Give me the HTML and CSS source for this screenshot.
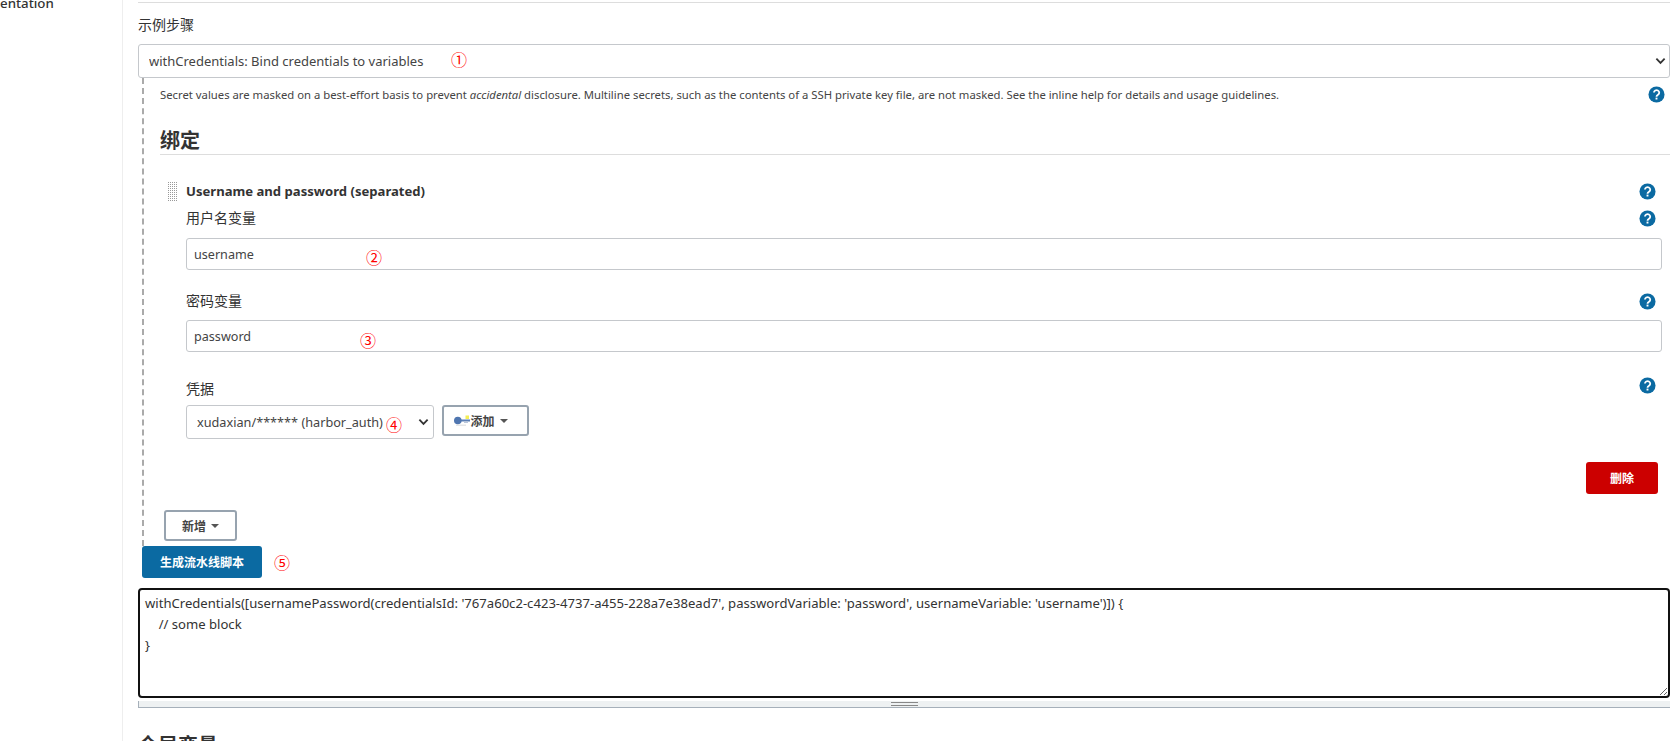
FILE: index.html
```html
<!DOCTYPE html>
<html lang="zh">
<head>
<meta charset="utf-8">
<title>Pipeline Syntax</title>
<link rel="stylesheet" href="styles.css">
</head>
<body>
<div class="page">
  <aside class="sidebar">entation</aside>
  <main class="main">
    <hr class="top-rule">
    <label class="label step-label">示例步骤</label>
    <div class="select-wrap full">
      <select class="select"><option>withCredentials: Bind credentials to variables</option></select>
      <svg class="chev" viewBox="0 0 12 8"><path d="M1.5 1.5 6 6l4.500-4.500" fill="none" stroke="#333" stroke-width="2"/></svg>
    </div>
    <div class="config">
      <div class="intro">
        <p>Secret values are masked on a best-effort basis to prevent <em>accidental</em> disclosure. Multiline secrets, such as the contents of a SSH private key file, are not masked. See the inline help for details and usage guidelines.</p>
        <span class="help"><svg viewBox="0 0 18 18"><use href="#q"/></svg></span>
      </div>
      <h2 class="section-title">绑定</h2>
      <div class="binding">
        <div class="handle"></div>
        <div class="binding-body">
          <div class="row title-row"><strong>Username and password (separated)</strong><span class="help"><svg viewBox="0 0 18 18"><use href="#q"/></svg></span></div>
          <div class="row label-row"><span class="label">用户名变量</span><span class="help"><svg viewBox="0 0 18 18"><use href="#q"/></svg></span></div>
          <input class="input" value="username">
          <div class="row label-row second"><span class="label">密码变量</span><span class="help"><svg viewBox="0 0 18 18"><use href="#q"/></svg></span></div>
          <input class="input" value="password">
          <div class="row label-row third"><span class="label">凭据</span><span class="help"><svg viewBox="0 0 18 18"><use href="#q"/></svg></span></div>
          <div class="cred-row">
            <div class="select-wrap cred">
              <select class="select"><option>xudaxian/****** (harbor_auth)</option></select>
              <svg class="chev" viewBox="0 0 12 8"><path d="M1.5 1.500 6 6l4.500-4.500" fill="none" stroke="#333" stroke-width="2"/></svg>
            </div>
            <button class="btn add-cred">
              <svg class="key" viewBox="0 0 16 12"><rect x="5" y="5" width="11" height="2" fill="#5b7fb5"/><rect x="10" y="7" width="4" height="1.500" fill="#b9c6da"/><rect x="2" y="10" width="10" height="1.500" fill="#e4e6e8"/><circle cx="3.800" cy="6" r="3.800" fill="#4f76b0"/><rect x="11.500" y="1" width="3.500" height="3.500" fill="#f4ee55"/></svg>添加<i class="caret"></i>
            </button>
          </div>
          <div class="delete-row"><button class="btn-danger">删除</button></div>
        </div>
      </div>
      <button class="btn add-new">新增<i class="caret"></i></button>
    </div>
    <button class="btn-primary">生成流水线脚本</button>
    <textarea class="script" spellcheck="false">withCredentials([usernamePassword(credentialsId: '767a60c2-c423-4737-a455-228a7e38ead7', passwordVariable: 'password', usernameVariable: 'username')]) {
    // some block
}</textarea>
    <div class="grip"><span></span></div>
    <h2 class="global">全局变量</h2>
  </main>
</div>
<span class="mark m1">①</span>
<span class="mark m2">②</span>
<span class="mark m3">③</span>
<span class="mark m4">④</span>
<span class="mark m5">⑤</span>
<svg class="defs" width="0" height="0">
  <symbol id="q" viewBox="0 0 18 18">
    <circle cx="9" cy="9" r="8.500" fill="#0b6aa2"/>
    <path d="M6.300 7a2.800 2.600 0 1 1 4.300 2.200C9.500 9.900 9 10.300 9 11.300" fill="none" stroke="#fff" stroke-width="1.900"/>
    <rect x="8" y="12.300" width="2" height="2" fill="#fff"/>
  </symbol>
</svg>
</body>
</html>
```
FILE: styles.css
```css
* { box-sizing: border-box; }
html, body { margin: 0; height: 741px; overflow: hidden; background: #fff; }
body { font-family: "Noto Sans", "Noto Sans CJK SC", sans-serif; font-size: 13px; color: #333; }
.page { display: flex; margin-top: -6px; height: 760px; }
.sidebar { width: 123px; flex: none; border-right: 1px solid #eee; font-weight: 500; font-size: 13.300px; line-height: 18px; }
.main { flex: 1; min-width: 0; padding-left: 15px; }
.top-rule { border: 0; border-top: 1px solid #ddd; margin: 8px 0 0; }
.label { font-size: 14px; line-height: 18px; color: #333; }
.step-label { display: block; margin-top: 13px; }
.select-wrap { position: relative; }
.select-wrap.full { margin-top: 10px; }
.select-wrap.cred { width: 248px; }
.select { display: block; width: 100%; height: 34px; appearance: none; background: #fff; border: 1px solid #c5c8cc; border-radius: 3px; padding: 0 30px 0 10px; font: 13px "Noto Sans", "Noto Sans CJK SC", sans-serif; color: #444; }
.cred .select { font-size: 12.700px; }
.chev { position: absolute; right: 4px; top: 13px; width: 11px; height: 8px; }
.cred .chev { right: 5px; }
.config { border-left: 2px dashed #aaa; margin-left: 4px; padding-left: 16px; }
.intro { display: flex; justify-content: space-between; align-items: center; height: 32px; padding-right: 5px; }
.intro p { margin: 0; font-size: 11.300px; color: #444; }
.help { width: 17px; height: 17px; display: block; flex: none; }
.help svg { display: block; width: 17px; height: 17px; }
.section-title { margin: 17px 0 0; font-size: 20px; line-height: 28px; font-weight: 700; border-bottom: 1px solid #ddd; height: 28px; color: #333; }
.binding { display: flex; margin: 26px 2px 0 7px; }
.handle { width: 11px; height: 20px; flex: none; margin-right: 8px; background-color: #999; background-image: linear-gradient(90deg, #fff 1px, transparent 1px), linear-gradient(#fff 1px, transparent 1px); background-size: 2px 2px; }
.binding-body { flex: 1; min-width: 0; }
.row { display: flex; justify-content: space-between; align-items: center; padding-right: 12px; }
.title-row { height: 20px; }
.title-row strong { font-size: 13.100px; font-weight: 700; color: #333; }
.label-row { height: 20px; margin-top: 7px; margin-bottom: 10px; }
.label-row.second { margin-top: 21px; margin-bottom: 9px; }
.label-row.third { margin-top: 23px; margin-bottom: 10px; }
.third .label { padding-top: 8px; }
.input { display: block; width: calc(100% - 6px); height: 32px; border: 1px solid #c5c8cc; border-radius: 3px; padding: 0 7px; font: 12.600px "Noto Sans", sans-serif; color: #444; background: #fff; }
.cred-row { display: flex; gap: 8px; align-items: flex-start; }
.btn { display: inline-flex; align-items: center; justify-content: center; background: #fff; border: 2px solid #97a3af; border-radius: 3px; font: 600 12px "Noto Sans", "Noto Sans CJK SC", sans-serif; color: #444; padding: 0; }
.add-cred { width: 87px; height: 31px; padding-right: 9px; }
.key { width: 16px; height: 13px; }
.caret { display: inline-block; margin-left: 5px; border: 4px solid transparent; border-top-color: #555; border-bottom: 0; }
.delete-row { display: flex; justify-content: flex-end; margin-top: 23px; padding-right: 10px; }
.btn-danger { width: 72px; height: 32px; background: #c00; color: #fff; border: 0; border-radius: 3px; font: 700 12px "Noto Sans", "Noto Sans CJK SC", sans-serif; }
.add-new { width: 73px; height: 31px; margin: 16px 0 5px 4px; }
.btn-primary { display: block; width: 120px; height: 32px; margin-left: 4px; background: #0b6aa2; color: #fff; border: 0; border-radius: 3px; font: 700 12px "Noto Sans", "Noto Sans CJK SC", sans-serif; }
.script { display: block; width: 100%; height: 110px; margin-top: 10px; border: 2px solid #111; border-radius: 4px; padding: 3px 5px; font: 13.100px/21px "Noto Sans", sans-serif; color: #333; outline: 0; resize: vertical; }
.grip { position: relative; height: 7px; margin-top: 3px; background: #eef1f2; border-bottom: 1px solid #a6b0ba; border-left: 1px solid #a6b0ba; display: flex; justify-content: center; }
.grip span { width: 27px; height: 4px; margin-top: 1px; border-top: 1px solid #888; border-bottom: 1px solid #888; }
.global { margin: 24px 0 0; font-size: 20px; line-height: 28px; color: #333; }
.mark { position: absolute; color: #f00; font: 16px "Noto Sans CJK SC", sans-serif; line-height: 18px; }
.m1 { left: 451px; top: 50px; }
.m2 { left: 366px; top: 248px; }
.m3 { left: 360px; top: 331px; }
.m4 { left: 386px; top: 415px; }
.m5 { left: 274px; top: 553px; }
.defs { position: absolute; }
```
